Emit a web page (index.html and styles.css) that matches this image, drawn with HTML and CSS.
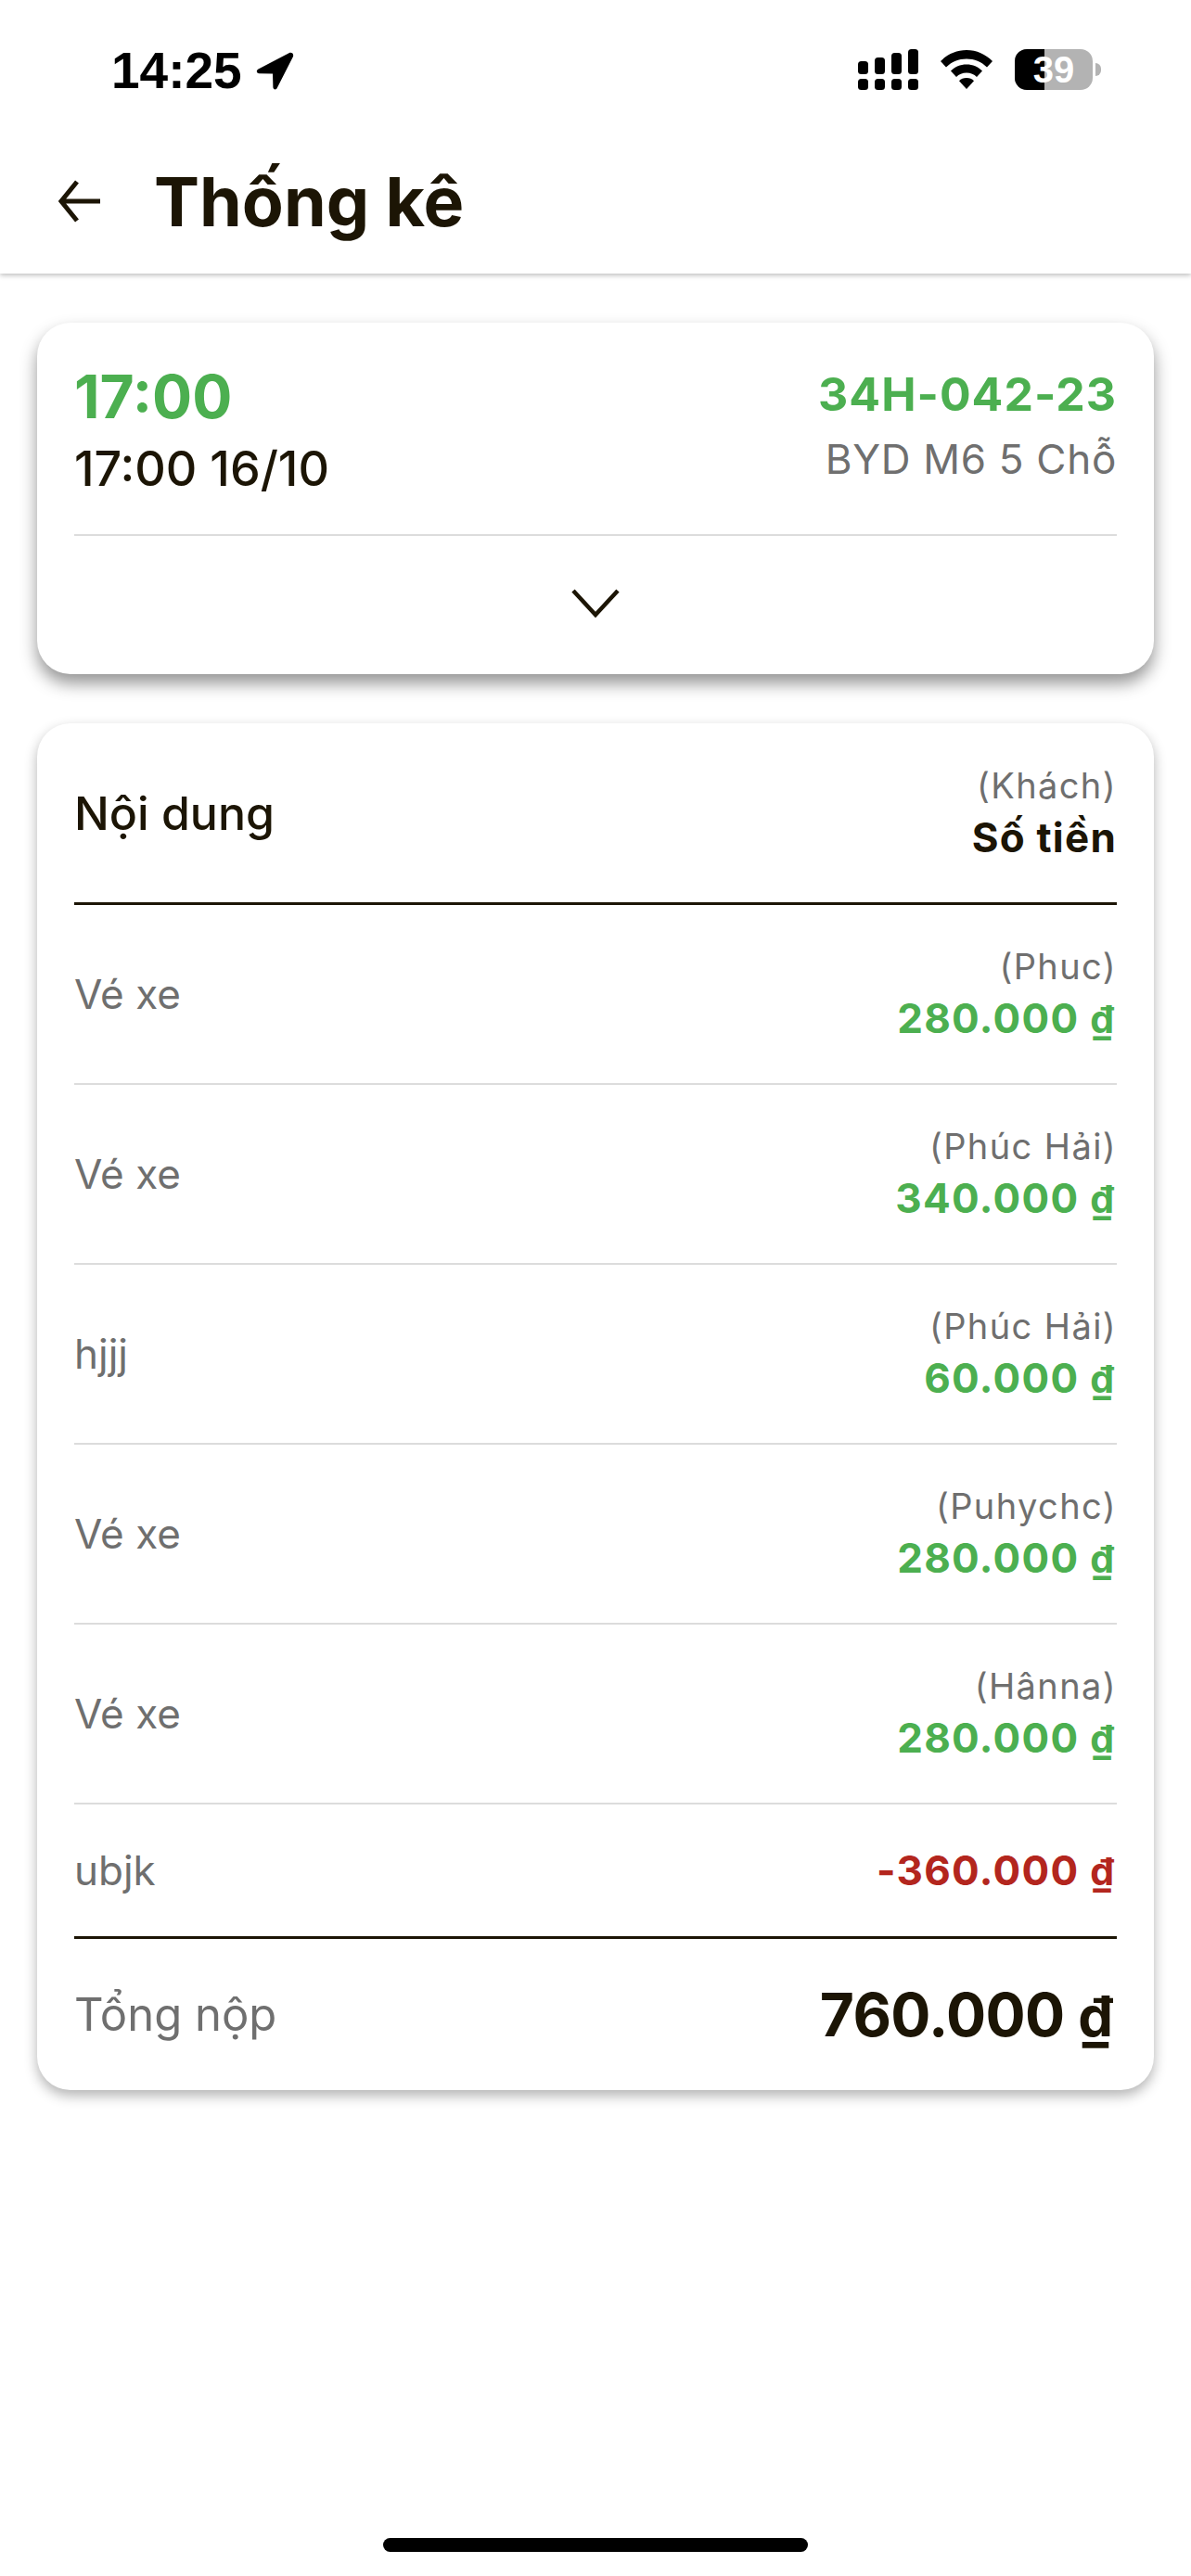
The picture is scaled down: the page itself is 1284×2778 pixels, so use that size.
FILE: index.html
```html
<!DOCTYPE html>
<html lang="vi">
<head>
  <meta charset="UTF-8">
  <meta name="viewport" content="width=device-width, initial-scale=1.0">
  <title>Thống kê</title>
  <link rel="stylesheet" href="styles.css">
</head>
<body>
  <div class="page">
    <header class="top">
      <div class="status">
        <div class="status-left">
          <span class="clock">14:25</span>
          <svg class="loc" width="42" height="41" viewBox="0 0 42 41"><path d="M37 1 3.500 18.500c-2.700 1.500-2 4.800 1 4.800l14.500.3.400 14.400c.1 2.800 3.500 3.300 4.400.7L41 5c.9-2.900-1.400-5-4-4z"/></svg>
        </div>
        <div class="status-right">
          <svg width="65" height="45" viewBox="0 0 65 45"><rect x="0" y="13" width="11" height="14" rx="3.500"/><rect x="18" y="9" width="11" height="18" rx="3.500"/><rect x="36" y="4" width="11" height="23" rx="3.500"/><rect x="54" y="0" width="11" height="27" rx="3.500"/><rect x="0" y="32" width="11" height="12" rx="3.500"/><rect x="18" y="32" width="11" height="12" rx="3.500"/><rect x="36" y="32" width="11" height="12" rx="3.500"/><rect x="54" y="32" width="11" height="12" rx="3.500"/></svg>
          <svg width="58" height="43" viewBox="0 0 58 43"><path d="M29 0C18 0 8.500 4.500 1 12l6 6.500C13 12.500 20.500 9.500 29 9.500S45 12.500 51 18.500l6-6.500C49.500 4.500 40 0 29 0z"/><path d="M29 15.500c-6.800 0-12.500 2.500-17 7l6 6.500c2.800-2.800 6.500-4.500 11-4.500s8.200 1.700 11 4.500l6-6.500c-4.500-4.500-10.200-7-17-7z"/><path d="M29 30c-3.300 0-6 1.200-8 3.200L29 42l8-8.800c-2-2-4.700-3.200-8-3.200z"/></svg>
          <div class="battery">
            <div class="battery-body"><span class="battery-fill"></span><span class="battery-num">39</span></div>
            <span class="battery-cap"></span>
          </div>
        </div>
      </div>
      <div class="appbar">
        <svg class="back" width="46" height="46" viewBox="0 0 46 46"><path d="M46 23H4M21 2 4 23l17 21" fill="none" stroke="#1c1505" stroke-width="5"/></svg>
        <h1>Thống kê</h1>
      </div>
    </header>

    <main class="content">
      <section class="card card-trip">
        <div class="trip-info">
          <div>
            <div class="trip-time">17:00</div>
            <div class="trip-date">17:00 16/10</div>
          </div>
          <div class="trip-car">
            <div class="plate">34H-042-23</div>
            <div class="car-name">BYD M6 5 Chỗ</div>
          </div>
        </div>
        <div class="expand">
          <svg width="52" height="32" viewBox="0 0 52 32"><path d="M2 3l24 26L50 3" fill="none" stroke="#1c1505" stroke-width="4.500"/></svg>
        </div>
      </section>

      <section class="card card-table">
        <div class="row row-head">
          <span class="head-label">Nội dung</span>
          <div class="cell-right">
            <div class="who">(Khách)</div>
            <div class="head-amount">Số tiền</div>
          </div>
        </div>
        <div class="row">
          <span class="label">Vé xe</span>
          <div class="cell-right"><div class="who">(Phuc)</div><div class="amount">280.000 <span class="dong">₫</span></div></div>
        </div>
        <div class="row">
          <span class="label">Vé xe</span>
          <div class="cell-right"><div class="who">(Phúc Hải)</div><div class="amount">340.000 <span class="dong">₫</span></div></div>
        </div>
        <div class="row">
          <span class="label">hjjj</span>
          <div class="cell-right"><div class="who">(Phúc Hải)</div><div class="amount">60.000 <span class="dong">₫</span></div></div>
        </div>
        <div class="row">
          <span class="label">Vé xe</span>
          <div class="cell-right"><div class="who">(Puhychc)</div><div class="amount">280.000 <span class="dong">₫</span></div></div>
        </div>
        <div class="row">
          <span class="label">Vé xe</span>
          <div class="cell-right"><div class="who">(Hânna)</div><div class="amount">280.000 <span class="dong">₫</span></div></div>
        </div>
        <div class="row row-last">
          <span class="label">ubjk</span>
          <div class="amount minus">-360.000 <span class="dong">₫</span></div>
        </div>
        <div class="total">
          <span class="total-label">Tổng nộp</span>
          <span class="total-amount">760.000 <span class="dong-big">₫</span></span>
        </div>
      </section>
    </main>

    <div class="home-bar"></div>
  </div>
</body>
</html>
```

FILE: styles.css
```css
* {
  box-sizing: border-box;
}
body {
  margin: 0;
  font-family: Inter, "Noto Sans", sans-serif;
  background: #fff;
  color: #1c1505;
}
.page {
  min-height: 2778px;
  display: flex;
  flex-direction: column;
}

/* status bar + app bar */
.top {
  height: 295px;
  background: #fff;
  box-shadow: 0 2px 5px rgba(0, 0, 0, 0.25);
}
.status {
  height: 142px;
  padding: 0 0 0 120px;
  display: flex;
  justify-content: space-between;
  align-items: center;
}
.status-left {
  display: flex;
  align-items: center;
  gap: 14px;
  margin-top: 10px;
}
.clock {
  font-family: "Liberation Sans", sans-serif;
  font-size: 55px;
  font-weight: 700;
  color: #000;
}
.status-right {
  display: flex;
  align-items: center;
  gap: 23px;
  width: 268px;
  margin-right: 91px;
  margin-top: 8px;
}
.battery {
  display: flex;
  align-items: center;
  gap: 3px;
}
.battery-body {
  position: relative;
  width: 84px;
  height: 44px;
  border-radius: 13px;
  background: #b3b3b3;
  overflow: hidden;
}
.battery-fill {
  display: block;
  width: 32px;
  height: 100%;
  background: #000;
}
.battery-num {
  position: absolute;
  inset: 0;
  text-align: center;
  font-family: "Liberation Sans", sans-serif;
  font-size: 40px;
  font-weight: 700;
  line-height: 44px;
  color: #fff;
}
.battery-cap {
  width: 6px;
  height: 14px;
  background: #b3b3b3;
  border-radius: 0 6px 6px 0;
}
.appbar {
  display: flex;
  align-items: center;
  gap: 58px;
  padding-left: 62px;
  height: 150px;
}
h1 {
  margin: 0;
  font-size: 73.5px;
  font-weight: 700;
}

.content {
  padding: 53px 40px 0;
}
.card {
  background: #fff;
  border-radius: 36px;
  padding: 0 40px;
}

/* trip card */
.card-trip {
  height: 379px;
  box-shadow: 0 10px 18px rgba(0, 0, 0, 0.42);
}
.trip-info {
  height: 230px;
  padding-top: 45px;
  display: flex;
  justify-content: space-between;
  border-bottom: 2px solid #dcdcdc;
}
.trip-time {
  font-size: 64px;
  font-weight: 700;
  line-height: 70px;
  margin-bottom: 8px;
  color: #4caf50;
}
.trip-date {
  font-size: 52px;
  font-weight: 500;
  line-height: 70px;
}
.trip-car {
  text-align: right;
}
.plate {
  font-size: 50px;
  font-weight: 700;
  line-height: 60px;
  margin: 2px 0 7px;
  color: #4caf50;
  letter-spacing: 1px;
}
.car-name {
  font-size: 44px;
  line-height: 66px;
  color: #6f6f6f;
  letter-spacing: 0.7px;
}
.expand {
  height: 147px;
  padding-bottom: 3px;
  display: flex;
  align-items: center;
  justify-content: center;
}

/* table card */
.card-table {
  margin-top: 53px;
  height: 1474px;
  box-shadow: 0 6px 14px rgba(0, 0, 0, 0.3);
}
.row {
  height: 194px;
  display: flex;
  justify-content: space-between;
  align-items: center;
  border-bottom: 2px solid #dcdcdc;
}
.row-head {
  height: 196px;
  border-bottom: 3px solid #1c1505;
}
.row-last {
  height: 145px;
  border-bottom: 3px solid #1c1505;
}
.head-label {
  font-size: 50px;
  font-weight: 500;
}
.cell-right {
  text-align: right;
}
.who {
  font-size: 38px;
  line-height: 50px;
  margin-bottom: 3px;
  color: #6f6f6f;
  letter-spacing: 1.4px;
}
.head-amount {
  font-size: 44px;
  font-weight: 700;
  line-height: 56px;
  letter-spacing: 1.2px;
}
.label {
  font-size: 44px;
  color: #6f6f6f;
}
.amount {
  font-size: 44px;
  font-weight: 700;
  line-height: 56px;
  color: #4caf50;
  letter-spacing: 1.3px;
  padding-right: 3px;
}
.dong {
  font-size: 41px;
  letter-spacing: 0;
}
.minus {
  color: #b3261e;
}
.total {
  height: 163px;
  display: flex;
  justify-content: space-between;
  align-items: center;
}
.total-label {
  font-size: 49px;
  color: #6f6f6f;
}
.total-amount {
  font-size: 64px;
  font-weight: 700;
  letter-spacing: -0.6px;
  padding-right: 4px;
}
.dong-big {
  font-size: 60px;
  letter-spacing: 0;
}

.home-bar {
  width: 458px;
  height: 15px;
  margin: auto auto 26px;
  border-radius: 8px;
  background: #000;
}
```
